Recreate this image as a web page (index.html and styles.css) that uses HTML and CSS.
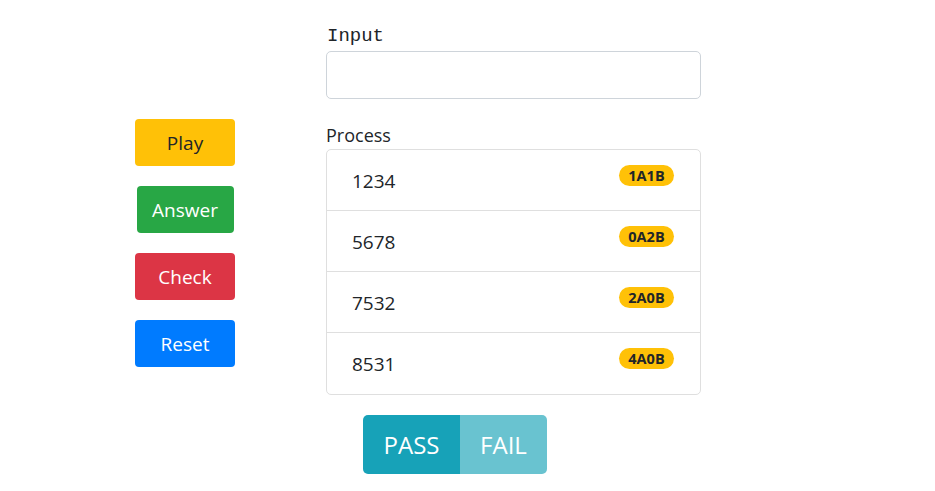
FILE: index.html
```html
<!DOCTYPE html>
<html>
<head>
<meta charset="utf-8">
<link rel="stylesheet" href="styles.css">
</head>
<body>
<div class="page">
  <div class="actions">
    <button class="btn btn-warning">Play</button>
    <button class="btn btn-success btn-answer">Answer</button>
    <button class="btn btn-danger">Check</button>
    <button class="btn btn-primary">Reset</button>
  </div>
  <div class="main">
    <label class="input-label">Input</label>
    <input class="form-control" type="text">
    <div class="process-label">Process</div>
    <ul class="list">
      <li class="list-item"><span class="num">1234</span><span class="badge">1A1B</span></li>
      <li class="list-item"><span class="num">5678</span><span class="badge">0A2B</span></li>
      <li class="list-item"><span class="num">7532</span><span class="badge">2A0B</span></li>
      <li class="list-item"><span class="num">8531</span><span class="badge">4A0B</span></li>
    </ul>
    <div class="result-group">
      <button class="rbtn rbtn-pass">PASS</button>
      <button class="rbtn rbtn-fail">FAIL</button>
    </div>
  </div>
</div>
</body>
</html>
```
FILE: styles.css
```css
* { box-sizing: border-box; }
html, body { margin: 0; padding: 0; background: #fff; }
body {
  font-family: "Open Sans", "Noto Sans", sans-serif;
  color: #212529;
}
.page {
  display: flex;
  align-items: flex-start;
  padding-left: 135px;
}
.actions {
  width: 100px;
  display: flex;
  flex-direction: column;
  align-items: center;
  gap: 20px;
  margin-top: 119px;
}
.btn {
  width: 100px;
  height: 47px;
  border: none;
  border-radius: 4px;
  font-family: "Open Sans", "Noto Sans", sans-serif;
  font-size: 19px;
  color: #fff;
  padding: 0;
  margin: 0;
}
.btn-answer { width: 97px; }
.btn-warning { background: #ffc107; color: #212529; }
.btn-success { background: #28a745; }
.btn-danger { background: #dc3545; }
.btn-primary { background: #007bff; }
.main {
  width: 375px;
  margin-left: 91px;
  display: flex;
  flex-direction: column;
  padding-top: 24px;
}
.input-label {
  font-family: "Liberation Mono", "DejaVu Sans Mono", monospace;
  font-size: 19px;
  line-height: 24px;
  margin-bottom: 3px;
  padding-left: 1px;
}
.form-control {
  height: 48px;
  border: 1px solid #ced4da;
  border-radius: 5px;
  margin: 0;
  width: 100%;
}
.process-label {
  font-size: 18px;
  line-height: 24px;
  margin-top: 24px;
  margin-bottom: 2px;
}
.list {
  list-style: none;
  margin: 0;
  padding: 0;
  border: 1px solid #dfdfdf;
  border-radius: 5px;
}
.list-item {
  height: 61px;
  display: flex;
  justify-content: space-between;
  align-items: flex-start;
  padding: 0 26px 0 25px;
  border-top: 1px solid #dfdfdf;
}
.list-item:first-child { border-top: none; height: 60px; }
.list-item:last-child { height: 62px; }
.num {
  font-size: 19px;
  line-height: 30px;
  margin-top: 16px;
}
.badge {
  margin-top: 15px;
  height: 21px;
  width: 55px;
  border-radius: 11px;
  background: #ffc107;
  font-weight: 700;
  font-size: 14.5px;
  line-height: 21px;
  text-align: center;
}
.result-group {
  display: flex;
  margin-top: 20px;
  margin-left: 37px;
}
.rbtn {
  height: 59px;
  border: none;
  margin: 0;
  padding: 0;
  color: #fff;
  font-family: "Open Sans", "Noto Sans", sans-serif;
  font-size: 24px;
}
.rbtn-pass {
  width: 97px;
  background: #17a2b8;
  border-radius: 5px 0 0 5px;
}
.rbtn-fail {
  width: 87px;
  background: #69c3d0;
  border-radius: 0 5px 5px 0;
}
```
